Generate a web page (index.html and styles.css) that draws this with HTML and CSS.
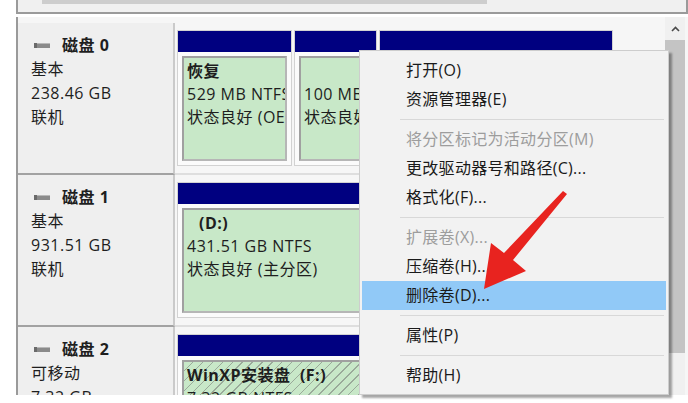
FILE: index.html
```html
<!DOCTYPE html>
<html lang="zh-CN">
<head>
    <meta charset="UTF-8">
    <meta name="viewport" content="width=device-width, initial-scale=1.0">
    <title>磁盘管理</title>
    <link rel="stylesheet" href="styles.css">
</head>
<body>
    <!-- upper pane (volume list), only its scrollbar is visible -->
    <div class="top-pane"><div class="hthumb"></div></div>

    <div class="disk-pane">
        <div class="disk-list">
            <div class="disk-row">
                <div class="disk-label">
                    <div class="disk-name">
                        <svg class="disk-icon" width="16" height="5" viewBox="0 0 16 5"><rect x="0" y="0" width="16" height="5" fill="#8a8a8a"/><rect x="0" y="0" width="16" height="1" fill="#b8b8b8"/><rect x="0" y="0" width="3" height="5" fill="#6a6a6a"/></svg>
                        <b>磁盘 0</b>
                    </div>
                    <div>基本</div>
                    <div>238.46 GB</div>
                    <div>联机</div>
                </div>
                <div class="parts">
                    <div class="part p-recovery">
                        <div class="part-head"></div>
                        <div class="part-body">
                            <div class="part-box">
                                <b>恢复</b><br>529 MB NTFS<br>状态良好 (OEM 分区)
                            </div>
                        </div>
                    </div>
                    <div class="part p-efi">
                        <div class="part-head"></div>
                        <div class="part-body">
                            <div class="part-box">
                                <br>100 MB<br>状态良好 (EFI 系统分区)
                            </div>
                        </div>
                    </div>
                    <div class="part p-sys">
                        <div class="part-head"></div>
                        <div class="part-body">
                            <div class="part-box">
                                <b>(C:)</b><br>237.85 GB NTFS<br>状态良好 (启动, 页面文件)
                            </div>
                        </div>
                    </div>
                </div>
            </div>

            <div class="disk-row">
                <div class="disk-label">
                    <div class="disk-name">
                        <svg class="disk-icon" width="16" height="5" viewBox="0 0 16 5"><rect x="0" y="0" width="16" height="5" fill="#8a8a8a"/><rect x="0" y="0" width="16" height="1" fill="#b8b8b8"/><rect x="0" y="0" width="3" height="5" fill="#6a6a6a"/></svg>
                        <b>磁盘 1</b>
                    </div>
                    <div>基本</div>
                    <div>931.51 GB</div>
                    <div>联机</div>
                </div>
                <div class="parts">
                    <div class="part p-full">
                        <div class="part-head"></div>
                        <div class="part-body">
                            <div class="part-box">
                                <b class="no-name">(D:)</b><br>431.51 GB NTFS<br>状态良好 (主分区)
                            </div>
                        </div>
                    </div>
                </div>
            </div>

            <div class="disk-row">
                <div class="disk-label">
                    <div class="disk-name">
                        <svg class="disk-icon" width="16" height="5" viewBox="0 0 16 5"><rect x="0" y="0" width="16" height="5" fill="#8a8a8a"/><rect x="0" y="0" width="16" height="1" fill="#b8b8b8"/><rect x="0" y="0" width="3" height="5" fill="#6a6a6a"/></svg>
                        <b>磁盘 2</b>
                    </div>
                    <div>可移动</div>
                    <div>7.32 GB</div>
                    <div>联机</div>
                </div>
                <div class="parts">
                    <div class="part p-full">
                        <div class="part-head"></div>
                        <div class="part-body">
                            <div class="part-box hatched">
                                <b>WinXP安装盘 &nbsp;(F:)</b><br>7.32 GB NTFS<br>状态良好 (活动, 主分区)
                            </div>
                        </div>
                    </div>
                </div>
            </div>
        </div>

        <div class="vscroll">
            <div class="vscroll-up">
                <svg width="9" height="6" viewBox="0 0 9 6"><polyline points="1,5 4.5,1.5 8,5" fill="none" stroke="#4a4a4a" stroke-width="1.6"/></svg>
            </div>
            <div class="vthumb"></div>
        </div>
    </div>

    <!-- context menu for the selected volume -->
    <ul class="menu">
        <li>打开(O)</li>
        <li>资源管理器(E)</li>
        <li class="sep"></li>
        <li class="disabled">将分区标记为活动分区(M)</li>
        <li>更改驱动器号和路径(C)...</li>
        <li>格式化(F)...</li>
        <li class="sep"></li>
        <li class="disabled">扩展卷(X)...</li>
        <li>压缩卷(H)...</li>
        <li class="active">删除卷(D)...</li>
        <li class="sep"></li>
        <li>属性(P)</li>
        <li class="sep"></li>
        <li>帮助(H)</li>
    </ul>

    <svg class="pointer" width="95" height="105" viewBox="478 188 95 105">
        <polygon points="563,191 567,194 513,260 526,271 484,289 491,243 504,253" fill="#e8231f"/>
    </svg>
</body>
</html>
```

FILE: styles.css
```css
body {
    margin: 0;
    width: 688px;
    height: 403px;
    overflow: hidden;
    position: relative;
    background-color: #fff;
    font-family: "Open Sans", "Noto Sans CJK SC", sans-serif;
    font-size: 16px;
    letter-spacing: 0.5px;
    color: #1e1e1e;
}
.top-pane {
    margin-left: 16px;
    height: 12px;
    background-color: #f0f0f0;
    border-left: 2px solid #9a9a9a;
    border-right: 2px solid #9a9a9a;
    border-bottom: 2px solid #9a9a9a;
}
.hthumb {
    margin-left: 24px;
    width: 445px;
    height: 4px;
    background-color: #cdcdcd;
}
.disk-pane {
    display: flex;
    margin: 3px 0 0 16px;
    height: 378px;
    border-left: 2px solid #9a9a9a;
    background-color: #f6f6f6;
}
.disk-list {
    flex: 1;
    padding-top: 6px;
    overflow: hidden;
}
.disk-row {
    display: flex;
    height: 152px;
}
.disk-label {
    width: 142px;
    padding: 10px 0 0 13px;
    line-height: 24px;
    white-space: nowrap;
    background-color: #efefef;
    border-right: 2px solid #cacaca;
    border-bottom: 2px solid #a2a2a2;
}
.disk-name {
    display: flex;
    align-items: center;
}
.disk-icon {
    margin: 0 12px 0 3px;
}
.parts {
    display: flex;
    align-items: flex-start;
    gap: 2px;
    width: 439px;
    padding: 7px 0 0 2px;
    border-bottom: 2px solid #dedede;
}
.part {
    display: flex;
    flex-direction: column;
    height: 134px;
    border: 1px solid #d2d2d2;
    background-color: #fbfbfb;
}
.p-recovery { width: 113px; }
.p-efi { width: 81px; }
.p-sys { width: 232px; }
.p-full { width: 434px; }
.part-head {
    height: 21px;
    background-color: #000080;
}
.part-body {
    flex: 1;
    display: flex;
    padding: 4px;
}
.part-box {
    flex: 1;
    padding: 2px 0 0 3px;
    line-height: 23px;
    white-space: nowrap;
    overflow: hidden;
    background-color: #c8e8c8;
    border: 2px solid #b6b6b6;
    border-left-color: #a0a0a0;
    border-top-color: #a0a0a0;
}
.no-name {
    margin-left: 12px;
}
.hatched {
    background-image: repeating-linear-gradient(135deg, #c8e8c8 0, #c8e8c8 6px, #9aaa9a 6px, #9aaa9a 7px);
}
.vscroll {
    width: 20px;
    margin-right: 3px;
    background-color: #f0f0f0;
}
.vscroll-up {
    display: flex;
    align-items: center;
    justify-content: center;
    height: 23px;
}
.vthumb {
    height: 313px;
    background-color: #c4c4c4;
}
.menu {
    position: absolute;
    left: 359px;
    top: 50px;
    width: 304px;
    margin: 0;
    padding: 5px 2px 4px;
    list-style: none;
    font-size: 16px;
    letter-spacing: 0.3px;
    color: #1a1a1a;
    background-color: #f2f2f2;
    border: 1px solid #cdcdcd;
    box-shadow: 3px 3px 2px rgba(0, 0, 0, 0.35);
}
.menu li {
    height: 29px;
    line-height: 29px;
    padding-left: 44px;
    white-space: nowrap;
}
.menu li.sep {
    height: 1px;
    margin: 5px 2px 5px 38px;
    padding: 0;
    background-color: #d8d8d8;
}
.menu li.disabled {
    color: #9d9d9d;
}
.menu li.active {
    background-color: #91c9f7;
}
.pointer {
    position: absolute;
    left: 478px;
    top: 188px;
}
```
